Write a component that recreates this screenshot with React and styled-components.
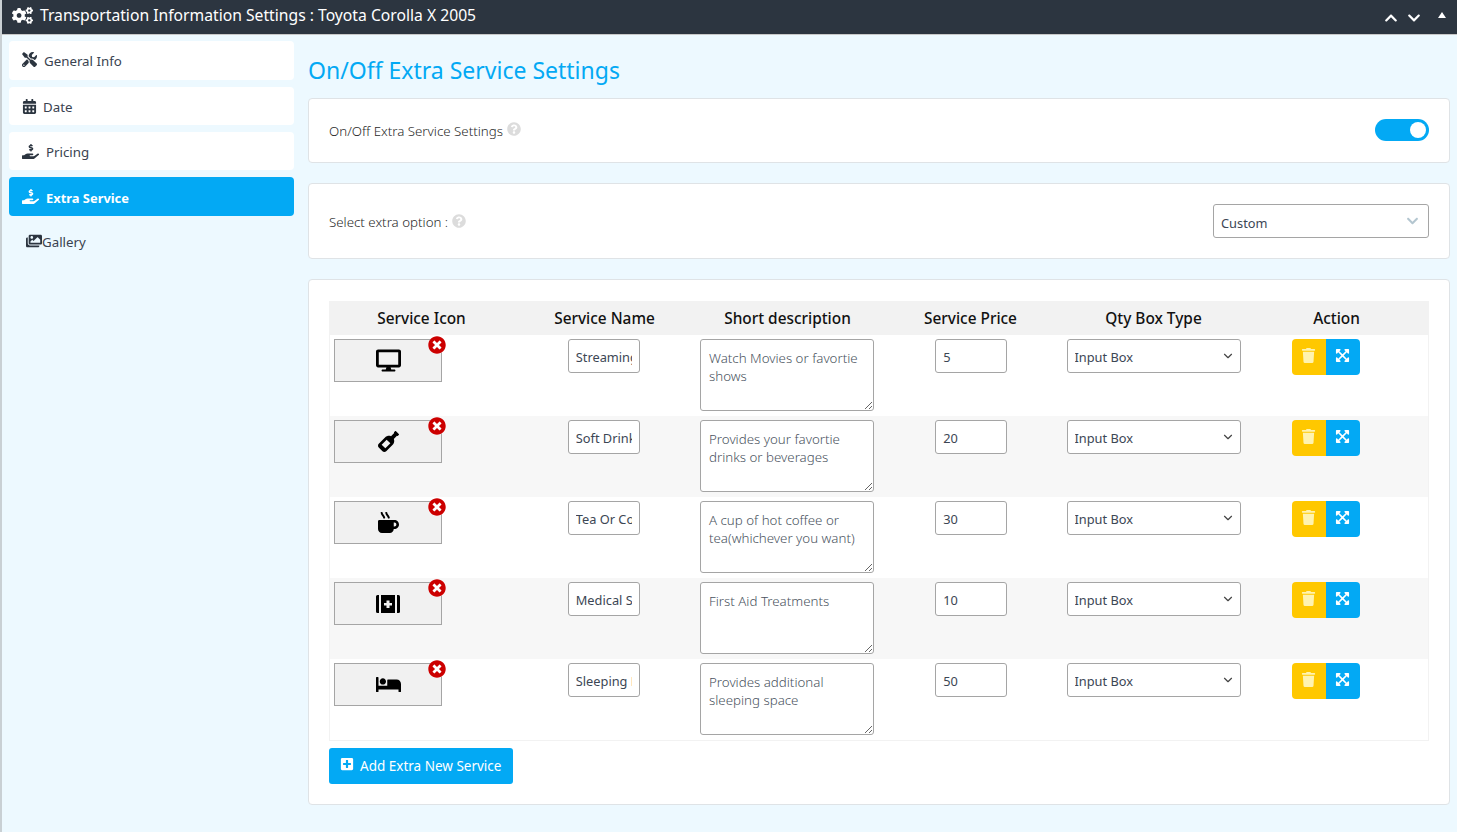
import React from 'react';
import styled, { createGlobalStyle } from 'styled-components';
import {
  FaCogs, FaTools, FaCalendarAlt, FaHandHoldingUsd, FaImages, FaTrash, FaExpandArrowsAlt,
  FaPlusSquare, FaQuestionCircle, FaTimesCircle, FaDesktop, FaWineBottle, FaMugHot, FaBed,
  FaChevronUp, FaChevronDown,
} from 'react-icons/fa';
import { FiChevronDown } from 'react-icons/fi';

const GlobalStyle = createGlobalStyle`
  html, body {
    margin: 0;
    padding: 0;
    background: #edf9ff;
    font-family: "Noto Sans", "Open Sans", sans-serif;
    color: #2d3540;
    overflow: hidden;
  }
  * { box-sizing: border-box; }
`;

const Page = styled.div`
  width: 1457px;
  height: 832px;
  border-left: 2px solid #c9d0d4;
  display: flex;
  flex-direction: column;
`;

const TopBar = styled.div`
  height: 35px;
  background: #2c3540;
  border-bottom: 1px solid #c8c8c8;
  color: #fff;
  display: flex;
  align-items: center;
  padding: 0 11px 4px 10px;
  font-size: 15.7px;
  gap: 7px;
  svg { flex: none; }
`;

const TopTitle = styled.div`
  flex: 1;
`;

const TopIcons = styled.div`
  display: flex;
  align-items: center;
  gap: 9px;
  font-size: 14px;
  margin-top: 5px;
`;

const Triangle = styled.span`
  margin-left: 8px;
  margin-top: -5px;
  border-left: 4.5px solid transparent;
  border-right: 4.5px solid transparent;
  border-bottom: 6px solid #fff;
`;

const Body = styled.div`
  flex: 1;
  display: flex;
  padding: 6px 7px 0 7px;
`;

const Sidebar = styled.div`
  width: 285px;
  flex: none;
  display: flex;
  flex-direction: column;
`;

const NavItem = styled.div`
  height: ${props => props.h}px;
  margin-bottom: ${props => props.mb}px;
  padding-top: ${props => props.pt || 0}px;
  border-radius: 4px;
  background: ${props => props.active ? '#03a9f4' : '#fff'};
  color: ${props => props.active ? '#fff' : '#3a4350'};
  font-weight: ${props => props.active ? 700 : 400};
  display: flex;
  align-items: center;
  padding-left: 13px;
  gap: ${props => props.gap}px;
  font-size: ${props => props.active ? 12.9 : 13.3}px;
  svg { font-size: 15px; color: ${props => props.active ? '#fff' : '#2c3540'}; margin-top: -2px; }
`;

const GalleryItem = styled.div`
  height: 38px;
  display: flex;
  align-items: center;
  padding-left: 17px;
  font-size: 13.3px;
  color: #3a4350;
  svg { font-size: 16px; color: #2c3540; margin-top: -2px; }
`;

const Main = styled.div`
  flex: 1;
  margin-left: 14px;
  display: flex;
  flex-direction: column;
`;

const Title = styled.h1`
  margin: 13px 0 12px;
  font-size: 23px;
  line-height: 32px;
  font-weight: 400;
  color: #03a9f4;
`;

const Card = styled.div`
  background: #fff;
  border: 1px solid #dfe3e6;
  border-radius: 4px;
  margin-bottom: 20px;
  padding: ${props => props.pad};
  height: ${props => props.h}px;
`;

const SettingRow = styled.div`
  height: 100%;
  display: flex;
  align-items: center;
  justify-content: space-between;
`;

const Label = styled.div`
  font-size: 13.3px;
  font-weight: 300;
  color: #2a2a2a;
  display: flex;
  align-items: center;
  gap: 4px;
  padding-top: ${props => props.pt || 0}px;
  svg { color: #dcdcdc; font-size: 14px; margin-top: -3px; }
`;

const Switch = styled.div`
  width: 54px;
  height: 22px;
  border-radius: 11px;
  background: #03a9f4;
  display: flex;
  align-items: center;
  justify-content: flex-end;
  padding-right: 3px;
  margin-top: -2px;
`;

const Knob = styled.div`
  width: 16px;
  height: 16px;
  border-radius: 50%;
  background: #fff;
`;

const SelectWrap = styled.div`
  position: relative;
  width: ${props => props.w}px;
  height: ${props => props.h}px;
  svg {
    position: absolute;
    right: ${props => props.iconRight}px;
    top: ${props => props.iconTop}%;
    transform: translateY(-50%);
    color: ${props => props.iconColor};
    font-size: ${props => props.iconSize}px;
    pointer-events: none;
  }
`;

const Select = styled.select`
  width: 100%;
  height: 100%;
  appearance: none;
  background: #fff;
  border: 1px solid #a5a5a5;
  border-radius: 3px;
  padding: ${props => props.pt || 2}px 7px 0;
  font: 400 12.8px "Noto Sans", sans-serif;
  color: #3c4654;
`;

const TableBox = styled.div`
  border: 1px solid #f2f2f2;
  border-top: 0;
`;

const Row = styled.div`
  display: grid;
  grid-template-columns: repeat(6, 1fr);
  height: ${props => props.h}px;
  background: ${props => props.bg};
`;

const HeadCell = styled.div`
  text-align: center;
  line-height: 35px;
  font-size: 15.4px;
  font-weight: 500;
  color: #111;
`;

const Cell = styled.div`
  padding: 4px 5px 0;
  display: flex;
  justify-content: ${props => props.center ? 'center' : 'flex-start'};
  align-items: flex-start;
`;

const IconCell = styled.div`
  padding: 4px 0 0 4px;
`;

const IconButton = styled.div`
  position: relative;
  width: 108px;
  height: 43px;
  background: #f1f1f1;
  border: 1px solid #a5a5a5;
  display: flex;
  align-items: center;
  justify-content: center;
  color: #000;
  font-size: ${props => props.size}px;
`;

const RemoveBadge = styled.span`
  position: absolute;
  top: -4px;
  right: -5px;
  width: 18px;
  height: 18px;
  border-radius: 50%;
  background: #fff;
  color: #cc0000;
  display: flex;
  font-size: 18px;
`;

const TextInput = styled.input`
  width: 72px;
  height: 34px;
  border: 1px solid #a5a5a5;
  border-radius: 3px;
  padding: 2px 7px 0;
  background: #fff;
  font: 400 12.8px "Noto Sans", sans-serif;
  color: #3c4654;
  outline: none;
  margin-left: ${props => props.shift || 0}px;
`;

const TextArea = styled.textarea`
  display: block;
  width: 174px;
  height: 72px;
  border: 1px solid #a5a5a5;
  border-radius: 3px;
  padding: 9px 8px;
  background: #fff;
  font: 300 13.3px/18px "Noto Sans", sans-serif;
  color: #4a5360;
  overflow: hidden;
`;

const ActionGroup = styled.div`
  display: flex;
  margin-left: 41px;
`;

const ActionButton = styled.div`
  width: 34px;
  height: 36px;
  display: flex;
  align-items: center;
  justify-content: center;
  padding-bottom: 3px;
  background: ${props => props.bg};
  color: ${props => props.fg};
  font-size: 15px;
  border-radius: ${props => props.radius};
`;

const AddButton = styled.div`
  margin-top: 7px;
  width: 184px;
  height: 36px;
  background: #03a9f4;
  color: #fff;
  border-radius: 3px;
  display: flex;
  align-items: center;
  padding: 0 0 1px 11px;
  gap: 6px;
  font-size: 13.5px;
  svg { font-size: 14px; margin-top: -3px; }
`;

const MedkitIcon = () => (
  <svg width="24" height="18" viewBox="0 0 24 18" fill="#000">
    <path d="M1.5 0H3v18H1.500A1.500 1.500 0 0 1 0 16.500V1.500A1.500 1.500 0 0 1 1.500 0Z" />
    <path d="M21 0h1.500A1.500 1.500 0 0 1 24 1.500v15a1.500 1.500 0 0 1-1.500 1.500H21Z" />
    <path fillRule="evenodd" d="M5 0h14v18H5ZM10.500 5.500v2.500H8v2.500h2.500V13h3v-2.500H16V8h-2.500V5.500Z" />
  </svg>
);

const SERVICES = [
  { icon: <FaDesktop />, size: 25, name: 'Streaming', desc: 'Watch Movies or favortie shows', price: '5' },
  { icon: <FaWineBottle />, size: 21, name: 'Soft Drinks', desc: 'Provides your favortie drinks or beverages', price: '20' },
  { icon: <FaMugHot />, size: 21, name: 'Tea Or Coffee', desc: 'A cup of hot coffee or tea(whichever you want)', price: '30' },
  { icon: <MedkitIcon />, size: 23, name: 'Medical Service', desc: 'First Aid Treatments', price: '10' },
  { icon: <FaBed />, size: 25, name: 'Sleeping Bed', desc: 'Provides additional sleeping space', price: '50' },
];

const HEADERS = ['Service Icon', 'Service Name', 'Short description', 'Service Price', 'Qty Box Type', 'Action'];

function App() {
  return (
    <Page>
      <GlobalStyle />
      <TopBar>
        <FaCogs size={21} />
        <TopTitle>Transportation Information Settings : Toyota Corolla X 2005</TopTitle>
        <TopIcons>
          <FaChevronUp />
          <FaChevronDown />
          <Triangle />
        </TopIcons>
      </TopBar>
      <Body>
        <Sidebar>
          <NavItem h={39} mb={7} gap={7}><FaTools />General Info</NavItem>
          <NavItem h={38} mb={7} gap={6} pt={2}><FaCalendarAlt />Date</NavItem>
          <NavItem h={38} mb={7} gap={7} pt={2}><FaHandHoldingUsd size={17} />Pricing</NavItem>
          <NavItem h={39} mb={7} gap={7} pt={2} active><FaHandHoldingUsd size={17} />Extra Service</NavItem>
          <GalleryItem><FaImages />Gallery</GalleryItem>
        </Sidebar>
        <Main>
          <Title>On/Off Extra Service Settings</Title>
          <Card h={65} pad="0 20px">
            <SettingRow>
              <Label>On/Off Extra Service Settings <FaQuestionCircle /></Label>
              <Switch><Knob /></Switch>
            </SettingRow>
          </Card>
          <Card h={76} pad="0 20px">
            <SettingRow>
              <Label pt={2}>Select extra option : <FaQuestionCircle /></Label>
              <SelectWrap w={216} h={34} iconRight={10} iconTop={50} iconColor="#b4c6d0" iconSize={13}>
                <Select pt={4} defaultValue="Custom">
                  <option>Custom</option>
                  <option>Default</option>
                </Select>
                <FaChevronDown />
              </SelectWrap>
            </SettingRow>
          </Card>
          <Card h={526} pad="21px 20px 0">
            <TableBox>
              <Row h={34} bg="#f2f2f2">
                {HEADERS.map(h => <HeadCell key={h}>{h}</HeadCell>)}
              </Row>
              {SERVICES.map((s, i) => (
                <Row key={s.name} h={81} bg={i % 2 ? '#f7f7f7' : '#fff'}>
                  <IconCell>
                    <IconButton size={s.size}>
                      {s.icon}
                      <RemoveBadge><FaTimesCircle /></RemoveBadge>
                    </IconButton>
                  </IconCell>
                  <Cell center><TextInput defaultValue={s.name} /></Cell>
                  <Cell><TextArea defaultValue={s.desc} /></Cell>
                  <Cell center><TextInput shift={2} defaultValue={s.price} /></Cell>
                  <Cell>
                    <SelectWrap w={174} h={34} iconRight={6} iconTop={50} iconColor="#444" iconSize={14}>
                      <Select defaultValue="Input Box">
                        <option>Input Box</option>
                        <option>Dropdown</option>
                      </Select>
                      <FiChevronDown />
                    </SelectWrap>
                  </Cell>
                  <Cell>
                    <ActionGroup>
                      <ActionButton bg="#ffc800" fg="#fff3b0" radius="4px 0 0 4px"><FaTrash /></ActionButton>
                      <ActionButton bg="#03a9f4" fg="#fff" radius="0 4px 4px 0"><FaExpandArrowsAlt /></ActionButton>
                    </ActionGroup>
                  </Cell>
                </Row>
              ))}
            </TableBox>
            <AddButton><FaPlusSquare />Add Extra New Service</AddButton>
          </Card>
        </Main>
      </Body>
    </Page>
  );
}

export default App;
